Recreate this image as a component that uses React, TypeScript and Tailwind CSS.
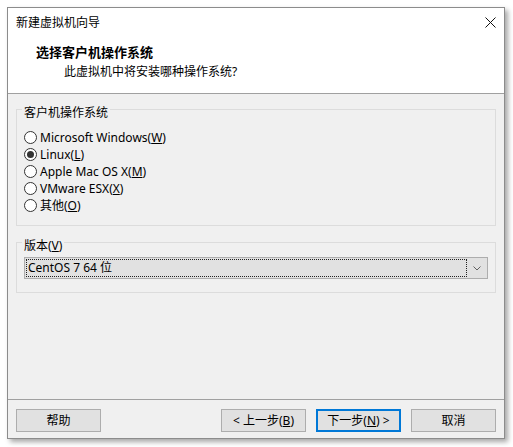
const font = {
  fontFamily: '"Segoe UI", "Noto Sans", "Noto Sans CJK SC", sans-serif',
};

function Radio({ checked, children }: { checked?: boolean; children: React.ReactNode }) {
  return (
    <div className="flex items-center h-[17px]">
      <span className="w-[13px] h-[13px] rounded-full border border-[#333333] bg-white flex items-center justify-center">
        {checked && <span className="w-[7px] h-[7px] rounded-full bg-[#333333]" />}
      </span>
      <span className="ml-[3px] leading-[17px]">{children}</span>
    </div>
  );
}

function Btn({ children, primary }: { children: React.ReactNode; primary?: boolean }) {
  return (
    <button
      className={
        primary
          ? "w-[85px] h-[23px] bg-[#e1e1e1] border-2 border-[#0078d7] text-[12px] leading-[19px]"
          : "w-[85px] h-[23px] bg-[#e1e1e1] border border-[#adadad] text-[12px] leading-[21px]"
      }
    >
      {children}
    </button>
  );
}

function Group({ label, className, children }: { label: React.ReactNode; className: string; children: React.ReactNode }) {
  return (
    <div className={"mx-[8px] border border-[#dcdcdc] px-[7px] " + className}>
      <div className="-mt-[5px] -ml-[2px] px-[2px] w-fit bg-[#f0f0f0] leading-[16px]">{label}</div>
      {children}
    </div>
  );
}

function App() {
  return (
    <div className="w-[513px] h-[447px] bg-white pl-[7px] pt-[7px] text-[12px] text-black" style={font}>
      <div className="w-[498px] h-[432px] border border-[#8c8c8c] bg-[#f0f0f0] flex flex-col shadow-[3px_3px_5px_rgba(0,0,0,0.35)]">
        {/* title bar */}
        <div className="h-[29px] bg-white flex items-center justify-between pl-[8px] pr-[8px]">
          <span className="leading-[16px]">新建虚拟机向导</span>
          <svg width="11" height="11" viewBox="0 0 11 11">
            <path d="M0.5 0.5 L10.5 10.5 M10.5 0.5 L0.5 10.5" stroke="#111" strokeWidth="1" />
          </svg>
        </div>

        {/* header */}
        <div className="h-[57px] bg-white pt-[6px] border-b border-[#a0a0a0]">
          <div className="pl-[28px] font-bold text-[13px] leading-[18px]">选择客户机操作系统</div>
          <div className="pl-[56px] mt-[3px] leading-[16px]">此虚拟机中将安装哪种操作系统?</div>
        </div>

        {/* content */}
        <div className="flex-1 pt-[15px]">
          <Group label="客户机操作系统" className="pb-[11px]">
            <div className="mt-[8px] flex flex-col">
              <Radio>
                Microsoft Windows(<span className="underline">W</span>)
              </Radio>
              <Radio checked>
                Linux(<span className="underline">L</span>)
              </Radio>
              <Radio>
                Apple Mac OS X(<span className="underline">M</span>)
              </Radio>
              <Radio>
                VMware ESX(<span className="underline">X</span>)
              </Radio>
              <Radio>
                其他(<span className="underline">O</span>)
              </Radio>
            </div>
          </Group>

          <Group
            label={
              <>
                版本(<span className="underline">V</span>)
              </>
            }
            className="mt-[16px] pb-[13px]"
          >
            <div className="mt-[3px] h-[22px] bg-[#e1e1e1] border border-[#adadad] flex items-center p-[1px]">
              <div className="flex-1 h-full border border-dotted border-[#222] flex items-center pl-[1px] leading-[16px]">
                CentOS 7 64 位
              </div>
              <div className="w-[19px] flex items-center justify-center">
                <svg width="8" height="5" viewBox="0 0 8 5">
                  <path d="M0.5 0.5 L4 4 L7.5 0.5" stroke="#606060" strokeWidth="1" fill="none" />
                </svg>
              </div>
            </div>
          </Group>
        </div>

        {/* footer */}
        <div className="border-t border-[#a0a0a0] h-[39px] flex items-start justify-between px-[8px] pt-[9px]">
          <Btn>帮助</Btn>
          <div className="flex gap-[10px]">
            <Btn>
              &lt; 上一步(<span className="underline">B</span>)
            </Btn>
            <Btn primary>
              下一步(<span className="underline">N</span>) &gt;
            </Btn>
            <Btn>取消</Btn>
          </div>
        </div>
      </div>
    </div>
  );
}

export default App;
